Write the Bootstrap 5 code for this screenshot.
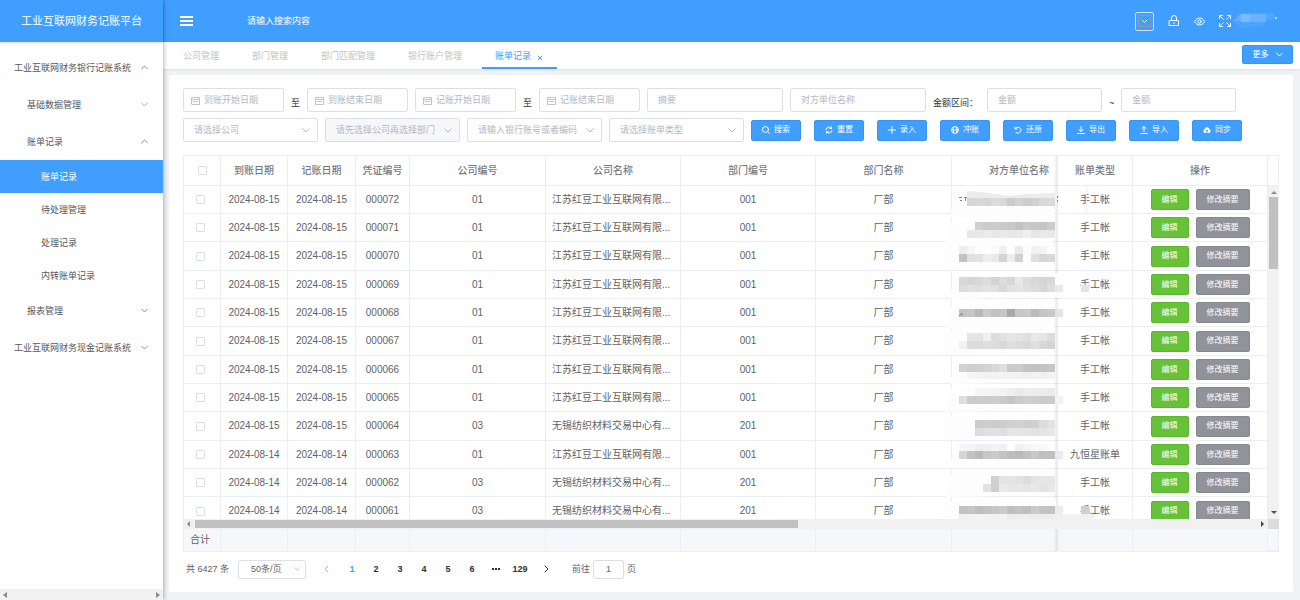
<!DOCTYPE html>
<html lang="zh-CN">
<head>
<meta charset="utf-8">
<meta name="viewport" content="width=device-width, initial-scale=1">
<title>工业互联网财务记账平台</title>
<link href="https://cdn.jsdelivr.net/npm/bootstrap@5.3.0/dist/css/bootstrap.min.css" rel="stylesheet">
<style>
:root{--blue:#409eff;--line:#ebeef5;--edge:#dcdfe6;--ink:#606266;--hint:#b4b8c1}
body{font-family:"Liberation Sans","Noto Sans CJK SC",sans-serif;font-size:9px;line-height:12px;color:var(--ink);background:#f0f2f5}
svg{display:block;flex:none}
.ln{fill:none;stroke:currentColor;stroke-width:1;stroke-linecap:round;stroke-linejoin:round}
/* side menu */
.side{width:163px;flex:none;background:#fff;box-shadow:1px 0 4px rgba(0,21,41,.3);z-index:2}
.brand{height:42px;flex:none;background:var(--blue);color:#fff;font-size:11px;box-shadow:0 1px 2px rgba(0,0,0,.15)}
.menu{padding-top:7px}
.menu a{display:flex;align-items:center;justify-content:space-between;height:37px;padding-right:15px;color:#55575c;text-decoration:none}
.menu a.lv1{padding-left:14px}
.menu a.lv2{padding-left:27px}
.menu a.lv3{padding-left:41px;height:33px}
.menu a.on{background:var(--blue);color:#fff}
.menu svg{color:#8c8f95}
.menu .lv2.warm svg{color:#c9a189}
.bar{background:#f1f1f1;color:#8a8a8a}
.side .bar{height:11px;padding:0 3px}
/* top bar */
.top{height:42px;flex:none;background:var(--blue);color:#fff;padding:0 23px 0 17px}
.top button{border:0;background:none;color:inherit;padding:0}
.top input{width:160px;border:0;background:none;color:#fff;padding:0 0 0 6px;outline:0}
.top input::placeholder{color:#fff;opacity:1}
.top .tools{gap:14px}
.top .pick{width:19px;height:19px;border:1px solid #cfe5ff;border-radius:2px;display:flex;align-items:center;justify-content:center}
.pick span{width:13px;height:12px;border:1px solid #8a9bb0;display:flex;align-items:center;justify-content:center}
.tabs{height:27px;flex:none;background:#fff;box-shadow:0 1px 2px rgba(0,0,0,.08);padding:0 7px}
.tabs .tab{display:flex;align-items:center;gap:6px;height:27px;padding:0 20px 0 13px;color:#c3c3c3;text-decoration:none}
.tabs .tab.on{color:var(--blue);padding-right:14px;border-bottom:2px solid var(--blue);padding-top:2px}
.act{--bs-btn-padding-y:0;--bs-btn-padding-x:0;--bs-btn-font-size:8px;--bs-btn-line-height:12px;--bs-btn-border-radius:2px;--bs-btn-color:#fff;--bs-btn-hover-color:#fff;--bs-btn-border-width:1px;display:inline-flex;align-items:center;justify-content:center;gap:4px;height:21px;width:50px}
.act-b{--bs-btn-bg:#409eff;--bs-btn-border-color:#3594f5;--bs-btn-hover-bg:#66b1ff}
.act-g{--bs-btn-bg:#67c23a;--bs-btn-border-color:#5bb82d;--bs-btn-hover-bg:#85ce61;width:38px}
.act-n{--bs-btn-bg:#909399;--bs-btn-border-color:#85888f;--bs-btn-hover-bg:#a6a9ad;width:54px}
.more{width:51px;height:19px;margin-top:3px;gap:7px}
/* content */
.panel{margin:6px 7px 8px 6px;padding:13px 14px 0;background:#fff;border-radius:3px}
.fields{gap:6px 7px}
.box{height:24px;border:1px solid var(--edge);border-radius:2px;background-color:#fff;font-size:9px;line-height:12px;color:var(--ink);padding:0 10px;outline:0}
.box::placeholder{color:var(--hint);opacity:1}
.date{width:101px;padding-left:20px;background:#fff url("data:image/svg+xml,%3Csvg xmlns='http://www.w3.org/2000/svg' width='9' height='9' fill='none' stroke='%23c0c4cc'%3E%3Cpath d='M.5 1.500h8v7h-8zM.5 3.500h8M2 5.500h5'/%3E%3C/svg%3E") 7px center no-repeat}
.wide{width:136px}
.sum{width:115px}
select.wide{width:135px}
select.box{appearance:none;color:var(--hint);background:#fff url("data:image/svg+xml,%3Csvg xmlns='http://www.w3.org/2000/svg' width='8' height='5' fill='none' stroke='%23b4b8c1'%3E%3Cpath d='M.5.5L4 4 7.500.5'/%3E%3C/svg%3E") right 7px center no-repeat}
select.box:disabled{background-color:#f5f7fa;opacity:1}
.word{color:#303133;padding-top:5px;white-space:nowrap}
label.word{width:47px}
.picks{gap:7px}
.acts{gap:13px}
/* grid */
.sheet{margin-top:13px;border:1px solid var(--line);border-width:1px 0 1px 1px;font-size:10px;min-height:0}
.view{overflow:hidden;flex:1;min-width:0;position:relative}
.view table{table-layout:fixed;width:100%;min-width:1113px;border-collapse:separate;border-spacing:0}
.view td,.view th{font-weight:400;text-align:center;padding:0 6px;border-right:1px solid var(--line);border-bottom:1px solid var(--line);white-space:nowrap;background:#fff}
.view th{height:30px;color:#77797f;font-weight:500}
.view tbody td{height:28px}
.view tbody td:first-child{padding:0 8px 0 4px}
.view tbody tr:nth-child(3n) td{height:29px}
.view td.nm{text-align:left}
.pin1,.pin2{position:sticky;z-index:2}
.pin1{right:135px}
.pin2{right:0}
.view .pin1::before{content:"";position:absolute;right:100%;top:0;bottom:-1px;width:5px;background:linear-gradient(to left,rgba(0,0,0,.09),transparent)}
.view .lead-cell{position:relative;z-index:3;background:none}
.smudge{position:absolute;left:-12px;top:0;pointer-events:none}
.gut{width:11px;border-right:1px solid var(--line);border-bottom:1px solid var(--line)}
.vbar{width:11px;color:#505050}
.vbar i{display:block;width:9px;height:72px;margin:3px auto 0;background:#c1c1c1}
.hbar{height:10px;padding:0 4px 0 3px}
.hbar i{display:block;width:56%;height:8px;background:#c1c1c1;margin-left:5px}
.corner{width:11px;background:#dcdcdc}
.foot td,.foot .gut{background:#f5f7fa!important}
.foot td{height:22px!important;border-bottom:0!important}
.form-check-input.tick{width:9px;height:9px;margin:0;border:1px solid var(--edge);border-radius:1px;vertical-align:middle;box-shadow:none}
/* pager */
.pager{height:40px;flex:none;padding:0 3px 6px}
.pager .num{width:24px;border:0;background:none;padding:0;font-weight:700;color:#303133}
.pager .num.on{color:var(--blue)}
.pager .turn{margin:0 2px 0 8px}
.pager .turn.next{margin:0 14px 0 2px}
.pager .box{height:19px}
.pager select.box{width:68px;margin-left:9px;padding:0 12px;color:var(--ink);background-position:right 5px center;background-size:6px 4px}
.pager input{width:31px;text-align:center;padding:0;margin:0 3px}
</style>
</head>
<body>
<div class="d-flex vh-100 overflow-hidden">
  <aside class="side d-flex flex-column">
    <div class="brand d-flex align-items-center justify-content-center">工业互联网财务记账平台</div>
    <nav class="menu flex-grow-1">
      <a class="lv1" href="#">工业互联网财务银行记账系统<svg class="ln" width="7" height="5"><path d="M.5 4l3-3 3 3"/></svg></a>
      <a class="lv2 warm" href="#">基础数据管理<svg class="ln" width="7" height="5"><path d="M.5 1l3 3 3-3"/></svg></a>
      <a class="lv2" href="#">账单记录<svg class="ln" width="7" height="5"><path d="M.5 4l3-3 3 3"/></svg></a>
      <a class="lv3 on" href="#">账单记录</a>
      <a class="lv3" href="#">待处理管理</a>
      <a class="lv3" href="#">处理记录</a>
      <a class="lv3" href="#">内转账单记录</a>
      <a class="lv2" href="#">报表管理<svg class="ln" width="7" height="5"><path d="M.5 1l3 3 3-3"/></svg></a>
      <a class="lv1" href="#">工业互联网财务现金记账系统<svg class="ln" width="7" height="5"><path d="M.5 1l3 3 3-3"/></svg></a>
    </nav>
    <div class="bar d-flex align-items-center justify-content-between">
      <svg width="4" height="6" fill="currentColor"><path d="M4 0v6L0 3z"/></svg>
      <svg width="4" height="6" fill="currentColor"><path d="M0 0v6l4-3z"/></svg>
    </div>
  </aside>

  <div class="flex-grow-1 d-flex flex-column" style="min-width:0">
    <header class="top d-flex align-items-center">
      <button type="button" aria-label="菜单"><svg width="13" height="10" fill="#fff"><path d="M0 0h13v2H0zM0 4h13v2H0zM0 8h13v2H0z"/></svg></button>
      <input class="ms-5" type="text" placeholder="请输入搜索内容" aria-label="搜索">
      <div class="tools ms-auto d-flex align-items-center">
        <button class="pick" type="button" aria-label="选择"><span><svg class="ln" width="7" height="5"><path d="M1 1l2.500 2.500L6 1"/></svg></span></button>
        <button type="button" aria-label="锁定"><svg class="ln" width="12" height="12"><path d="M1.500 5.500h9v5h-9zM3.500 5.500V3a2.500 2.500 0 0 1 5 0v2.500M6 7.500v1"/></svg></button>
        <button type="button" aria-label="查看"><svg class="ln" width="11" height="9"><path d="M.5 4.500C3-.2 8-.2 10.500 4.500 8 9.200 3 9.200.5 4.500z"/><circle cx="5.500" cy="4.500" r="1.700"/></svg></button>
        <div class="d-flex align-items-center">
          <button type="button" aria-label="全屏"><svg width="12" height="12" fill="none" stroke="#fff"><path d="M.5 4V.5H4M.5.5l4 4M8 .5h3.500V4M11.500.5l-4 4M.5 8v3.500H4M.5 11.500l4-4M11.500 8v3.500H8M11.500 11.500l-4-4"/></svg></button>
          <svg width="46" height="18"><path d="M1 9L8 1h36l-1 6-9 1v6l-24 2z" fill="#4ca4ff"/><path d="M3 9l7-7v7z" fill="#65b1ff"/><path d="M10 2h9v8h-9z" fill="#7bbcff"/><path d="M19 2h16v8H19z" fill="#6ab3ff"/><path d="M35 2h8v6h-8z" fill="#51a7ff"/><circle cx="45" cy="6" r="1" fill="#d8ebff"/></svg>
        </div>
      </div>
    </header>

    <div class="tabs d-flex align-items-start">
      <a class="tab" href="#">公司管理</a>
      <a class="tab" href="#">部门管理</a>
      <a class="tab" href="#">部门匹配管理</a>
      <a class="tab" href="#">银行账户管理</a>
      <a class="tab on" href="#">账单记录<svg class="ln mt-1" width="6" height="6"><path d="M1 1l4 4M5 1L1 5"/></svg></a>
      <button class="btn act act-b more ms-auto" type="button">更多<svg class="ln" width="7" height="5"><path d="M.5 1l3 3 3-3"/></svg></button>
    </div>

    <main class="panel flex-grow-1 d-flex flex-column" style="min-height:0">
      <form class="fields d-flex flex-wrap align-items-center">
        <input class="box date" placeholder="到账开始日期" aria-label="到账开始日期"><span class="word">至</span>
        <input class="box date" placeholder="到账结束日期" aria-label="到账结束日期">
        <input class="box date" placeholder="记账开始日期" aria-label="记账开始日期"><span class="word">至</span>
        <input class="box date" placeholder="记账结束日期" aria-label="记账结束日期">
        <input class="box wide" placeholder="摘要" aria-label="摘要">
        <input class="box wide" placeholder="对方单位名称" aria-label="对方单位名称">
        <label class="word" for="low">金额区间：</label>
        <input class="box sum" id="low" placeholder="金额"><span class="word">~</span>
        <input class="box sum" placeholder="金额" aria-label="金额上限">
        <div class="picks w-100 d-flex flex-wrap align-items-center">
          <select class="box wide" aria-label="公司"><option>请选择公司</option></select>
          <select class="box wide" aria-label="部门" disabled><option>请先选择公司再选择部门</option></select>
          <select class="box wide" aria-label="银行账号"><option>请输入银行账号或者编码</option></select>
          <select class="box wide" aria-label="账单类型"><option>请选择账单类型</option></select>
          <div class="acts d-flex">
            <button class="btn act act-b" type="button"><svg class="ln" width="8" height="8"><circle cx="3.500" cy="3.500" r="3"/><path d="M6 6l1.500 1.500"/></svg>搜索</button>
            <button class="btn act act-b" type="button"><svg class="ln" width="8" height="8"><path d="M1 3.500A3 3 0 0 1 6.500 2.500H4.800M6.500 2.500V.8M7 4.500A3 3 0 0 1 1.500 5.500h1.700M1.500 5.500v1.700"/></svg>重置</button>
            <button class="btn act act-b" type="button"><svg class="ln" width="8" height="8"><path d="M4 .5v7M.5 4h7"/></svg>录入</button>
            <button class="btn act act-b" type="button"><svg class="ln" width="8" height="8"><circle cx="4" cy="4" r="3.400"/><path d="M2.500 1v6M5.500 1v6M1 4h6" stroke-width=".8"/></svg>冲账</button>
            <button class="btn act act-b" type="button"><svg class="ln" width="8" height="8"><path d="M1 1v2h2M1.300 2.800A3 3 0 1 1 2 6.500"/></svg>还原</button>
            <button class="btn act act-b" type="button"><svg class="ln" width="8" height="8"><path d="M4 .5v5M2 3.500l2 2 2-2M.5 7.500h7"/></svg>导出</button>
            <button class="btn act act-b" type="button"><svg class="ln" width="8" height="8"><path d="M4 5.500v-5M2 2.500l2-2 2 2M.5 7.500h7"/></svg>导入</button>
            <button class="btn act act-b" type="button"><svg width="8" height="8"><path d="M2 7a2 2 0 0 1-.5-3.800 2.600 2.600 0 0 1 5 0A2 2 0 0 1 6 7z" fill="#fff"/><path d="M4 7V4M3 5l1-1 1 1" stroke="#409eff" fill="none"/></svg>同步</button>
          </div>
        </div>
      </form>

      <div class="sheet d-flex flex-column flex-grow-1">
        <div class="d-flex">
          <div class="view"><table>
            <colgroup class="cols"></colgroup>
            <thead><tr>
              <th scope="col"><input class="form-check-input tick" type="checkbox" aria-label="全选"></th>
              <th scope="col">到账日期</th><th scope="col">记账日期</th><th scope="col">凭证编号</th><th scope="col">公司编号</th><th scope="col">公司名称</th><th scope="col">部门编号</th><th scope="col">部门名称</th><th scope="col">对方单位名称</th><th scope="col" class="pin1">账单类型</th><th scope="col" class="pin2">操作</th>
            </tr></thead>
          </table></div>
          <div class="gut"></div>
        </div>
        <div class="d-flex flex-grow-1" style="min-height:0">
          <div class="view"><table><colgroup class="cols"></colgroup><tbody id="rows"></tbody></table></div>
          <div class="bar vbar d-flex flex-column align-items-center">
            <svg class="mt-1" width="6" height="4" fill="#8a8a8a"><path d="M0 4h6L3 1z"/></svg><i></i>
            <svg class="mt-auto mb-1" width="6" height="4" fill="currentColor"><path d="M0 0h6L3 3z"/></svg>
          </div>
        </div>
        <div class="d-flex">
          <div class="bar hbar d-flex align-items-center flex-grow-1">
            <svg width="3" height="6" fill="currentColor"><path d="M3 0v6L0 3z"/></svg><i></i>
            <svg class="ms-auto" width="3" height="6" fill="#404040"><path d="M0 0v6l3-3z"/></svg>
          </div>
          <div class="corner"></div>
        </div>
        <div class="d-flex foot">
          <div class="view"><table><colgroup class="cols"></colgroup><tbody><tr>
            <td>合计</td><td></td><td></td><td></td><td></td><td></td><td></td><td></td><td></td><td class="pin1"></td><td class="pin2"></td>
          </tr></tbody></table></div>
          <div class="gut"></div>
        </div>
      </div>

      <nav class="pager d-flex align-items-center" aria-label="分页">
        <span>共 6427 条</span>
        <select class="box" aria-label="每页条数"><option>50条/页</option></select>
        <button class="num turn" type="button" aria-label="上一页"><svg class="ln mx-auto" width="5" height="8" style="color:#b4b8c1"><path d="M4 1L1 4l3 3"/></svg></button>
        <button class="num on" type="button">1</button>
        <button class="num" type="button">2</button>
        <button class="num" type="button">3</button>
        <button class="num" type="button">4</button>
        <button class="num" type="button">5</button>
        <button class="num" type="button">6</button>
        <button class="num" type="button" aria-label="更多页"><svg class="mx-auto" width="8" height="2" fill="#303133"><path d="M0 0h2v2H0zM3 0h2v2H3zM6 0h2v2H6z"/></svg></button>
        <button class="num" type="button">129</button>
        <button class="num turn next" type="button" aria-label="下一页"><svg class="ln mx-auto" width="5" height="8"><path d="M1 1l3 3-3 3"/></svg></button>
        <label for="go">前往</label>
        <input class="box" id="go" value="1"><span>页</span>
      </nav>
    </main>
  </div>
</div>
<script>
const widths = [37, 67, 68, 54, 136, 135, 135, 136, 135, 75, 135];
document.querySelectorAll('.cols').forEach(g => {
  g.innerHTML = widths.map(w => `<col style="width:${w}px">`).join('');
});

const hd = '江苏红豆工业互联网有限...', wx = '无锡纺织材料交易中心有...';
const rows = [
  ['15', '072', '01', hd, '001'], ['15', '071', '01', hd, '001'], ['15', '070', '01', hd, '001'],
  ['15', '069', '01', hd, '001'], ['15', '068', '01', hd, '001'], ['15', '067', '01', hd, '001'],
  ['15', '066', '01', hd, '001'], ['15', '065', '01', hd, '001'], ['15', '064', '03', wx, '201'],
  ['14', '063', '01', hd, '001', '九恒星账单'], ['14', '062', '03', wx, '201'], ['14', '061', '03', wx, '201']
];

// Masked payee names: top, height, first 8px block, one grey level per block (two hex digits)
const blocks = [
  [12, 8, 1, 'd6 d8 d6 dc d8 cb d2 cc d0 d8 da'],
  [36, 8, 2, 'd0 ca cc ca c8 c2 ca c8 c4 cc'],
  [44, 8, 1, 'e8 e8 ec e8 ea e8 e9 f0 e6 e9 e8'],
  [60, 8, 0, 'ee f6 fe ff fb f0 ff ea fc f2 f3 ff'],
  [68, 8, 0, 'c2 e0 e3 ee ea d4 ee d2 fc e0 d6 d9'],
  [91, 8, 0, 'd8 d4 d8 dc d3 dc d6 e8 dc d8 d4 d8'],
  [99, 7, 0, 'dc e2 de e2 e0 d8 e2 e4 e0 dc d6 dd e9'],
  [123, 8, 0, 'c4 c6 b8 cb c2 c6 aa c6 c9 ba c4 c9 e4'],
  [147, 8, 1, 'e6 e4 f0 dc e2 e6 e4 df e8 e6 dc'],
  [155, 8, 0, 'f2 dc dc e0 dc d8 e0 dc d8 df d8 d4'],
  [178, 8, 0, 'd2 ce d0 d3 d8 df cb cb c4 c2 c2 c6'],
  [186, 7, 1, 'f6 f4 f2 f3 f3 f3 f2 f0 f3 f0 f3'],
  [202, 8, 2, 'f6 f5 f4 f2 ee ea ee ec ed ea'],
  [210, 8, 0, 'de cc cc cb ce ca c4 cb cf cd ca cb f3'],
  [234, 8, 2, 'cc ce cb ce d0 d2 ce d0 dc e2'],
  [242, 8, 2, 'dc e0 e2 de e6 e6 e4 e2 e4 e8'],
  [258, 7, 0, 'f6 f4 ef ef f2 f1 fe f0 f5 f8 f8'],
  [265, 8, 0, 'd6 c2 b9 c7 cb c2 bc b9 c0 c8 bf bf ea'],
  [290, 8, 4, 'd0 e4 e5 e2 dc e4 e6 e6'],
  [298, 8, 3, 'e2 cf ea e6 e8 e4 e8 e2 e8'],
  [320, 8, 0, 'c2 c6 bd c2 c6 cb bf c4 bf cb c4 c2 ec'],
  [328, 5, 0, 'f0 f2 f4 f2 f0 f2 ec ee ee ec ec ee f0 f2 f2 f0 f2']
];
function smudge() {
  let s = '<svg class="smudge" width="160" height="333">';
  [10, 38, 62, 91, 121, 147, 176, 204, 232, 260, 289, 317].forEach((y, i) => {
    const w = i === 3 || i === 11 ? 126 : 114 + i % 3 * 3;
    s += `<path d="M${14 - i % 3 * 4} ${y - 1}l${w - 16} -3v20l4 4-${w - 8} 2z" fill="#fdfdfd"/>`;
  });
  s += '<path d="M27 12V5l16 1 24 4 20-2 28-1v5z" fill="#ececec"/>';
  blocks.forEach(([y, h, start, greys]) => {
    greys.split(' ').forEach((g, i) => {
      s += `<rect x="${19 + (start + i) * 8}" y="${y}" width="8" height="${h}" fill="#${g}${g}${g}"/>`;
    });
  });
  s += '<path d="M19 11.500h3M20 14.500h2M24 11.500h3M25.500 12v3M117.500 10v2M117.500 14v2M19 130l3-3v3" stroke="#888" fill="none"/>';
  return s + '<path d="M141 99h8v7h-8z" fill="#e4e4e4"/><path d="M141 320h8l2 8h-10z" fill="#cfcfcf"/></svg>';
}
document.getElementById('rows').innerHTML = rows.map((r, i) => `<tr>
  <td><input class="form-check-input tick" type="checkbox" aria-label="选择 000${r[1]}"></td>
  <td>2024-08-${r[0]}</td><td>2024-08-${r[0]}</td><td>000${r[1]}</td><td>${r[2]}</td>
  <td class="nm">${r[3]}</td><td>${r[4]}</td><td>厂部</td>
  <td class="${i ? '' : 'lead-cell'}">${i ? '' : smudge()}</td>
  <td class="pin1">${r[5] || '手工帐'}</td>
  <td class="pin2"><div class="d-flex justify-content-center" style="gap:7px"><button class="btn act act-g" type="button">编辑</button><button class="btn act act-n" type="button">修改摘要</button></div></td></tr>`).join('');
</script>
</body>
</html>
